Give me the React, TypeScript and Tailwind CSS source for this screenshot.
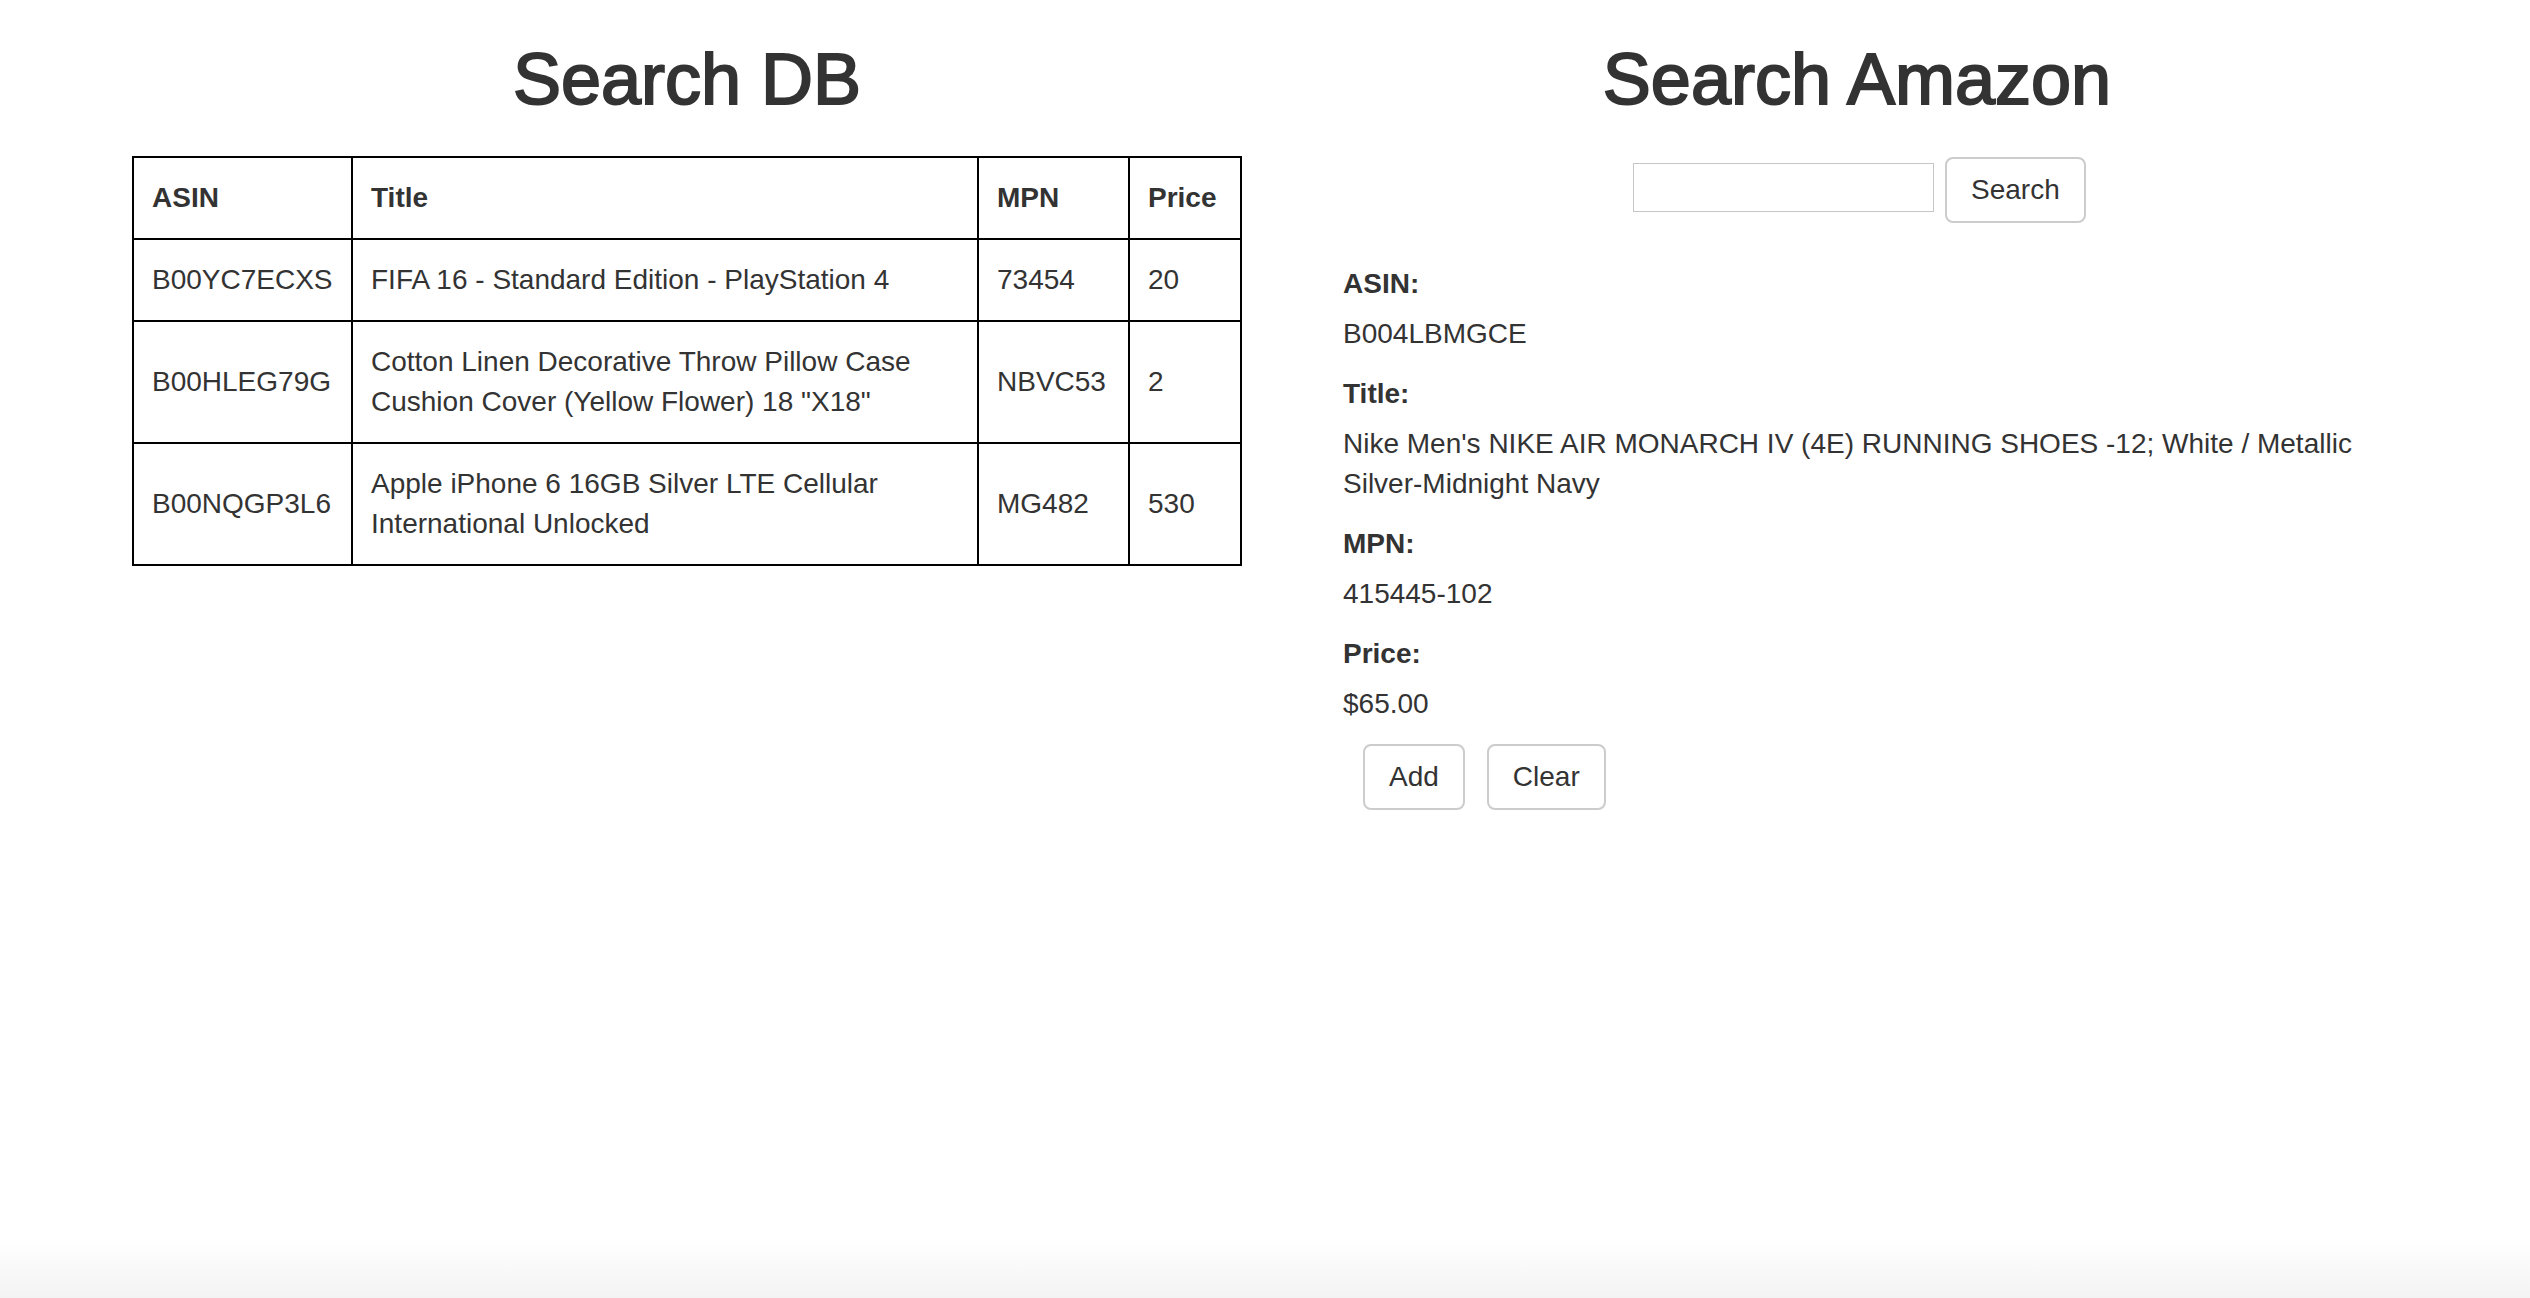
import React from 'react'

const rows = [
  { asin: 'B00YC7ECXS', title: 'FIFA 16 - Standard Edition - PlayStation 4', mpn: '73454', price: '20' },
  { asin: 'B00HLEG79G', title: 'Cotton Linen Decorative Throw Pillow Case Cushion Cover (Yellow Flower) 18 "X18"', mpn: 'NBVC53', price: '2' },
  { asin: 'B00NQGP3L6', title: 'Apple iPhone 6 16GB Silver LTE Cellular International Unlocked', mpn: 'MG482', price: '530' },
]

const fields = [
  { label: 'ASIN:', value: 'B004LBMGCE' },
  { label: 'Title:', value: "Nike Men's NIKE AIR MONARCH IV (4E) RUNNING SHOES -12; White / Metallic Silver-Midnight Navy" },
  { label: 'MPN:', value: '415445-102' },
  { label: 'Price:', value: '$65.00' },
]

function Btn({ children, className = '' }: { children: React.ReactNode; className?: string }) {
  return (
    <button className={`bg-white border-2 border-[#cccccc] rounded-[8px] px-[24px] py-[11px] leading-[40px] text-[28px] text-[#333] ${className}`}>
      {children}
    </button>
  )
}

export default function App() {
  return (
    <div className="min-h-screen flex flex-col bg-white text-[#333] font-['Liberation_Sans',Arial,sans-serif] text-[28px] leading-[40px]">
      <div className="flex items-start">
        {/* left: db table */}
        <section className="ml-[132px] w-[1110px]">
          <h1 className="mt-[40px] text-center text-[72px] leading-[79px] [-webkit-text-stroke:2px_#333]">
            Search DB
          </h1>
          <table className="mt-[37px] w-[1110px] table-fixed border-collapse border-2 border-black">
            <colgroup>
              <col className="w-[219px]" />
              <col className="w-[626px]" />
              <col className="w-[151px]" />
              <col className="w-[112px]" />
            </colgroup>
            <thead>
              <tr>
                {['ASIN', 'Title', 'MPN', 'Price'].map((h) => (
                  <th key={h} className="border-2 border-black px-[18px] py-[20px] text-left font-bold align-middle">
                    {h}
                  </th>
                ))}
              </tr>
            </thead>
            <tbody>
              {rows.map((r) => (
                <tr key={r.asin}>
                  <td className="border-2 border-black px-[18px] py-[20px] align-middle">{r.asin}</td>
                  <td className="border-2 border-black px-[18px] py-[20px] align-middle">{r.title}</td>
                  <td className="border-2 border-black px-[18px] py-[20px] align-middle">{r.mpn}</td>
                  <td className="border-2 border-black px-[18px] py-[20px] align-middle">{r.price}</td>
                </tr>
              ))}
            </tbody>
          </table>
        </section>

        {/* right: amazon search */}
        <section className="ml-[101px] w-[1080px]">
          <h1 className="mt-[40px] w-[1028px] text-center text-[72px] leading-[79px] [-webkit-text-stroke:2px_#333]">
            Search Amazon
          </h1>
          <div className="mt-[38px] pl-[290px] flex items-start gap-[11px]">
            <input className="mt-[6px] w-[301px] h-[49px] border border-[#c6c6c6] outline-none" />
            <Btn>Search</Btn>
          </div>

          <div className="mt-[41px] w-[1028px]">
            {fields.map((f) => (
              <div key={f.label}>
                <div className="font-bold mb-[10px]">{f.label}</div>
                <p className="mb-[20px]">{f.value}</p>
              </div>
            ))}
            <div className="pl-[20px] flex gap-[22px]">
              <Btn>Add</Btn>
              <Btn>Clear</Btn>
            </div>
          </div>
        </section>
      </div>
      <div className="flex-1" />
      <div className="h-[60px] bg-gradient-to-b from-white to-[#f3f3f3]" />
    </div>
  )
}
